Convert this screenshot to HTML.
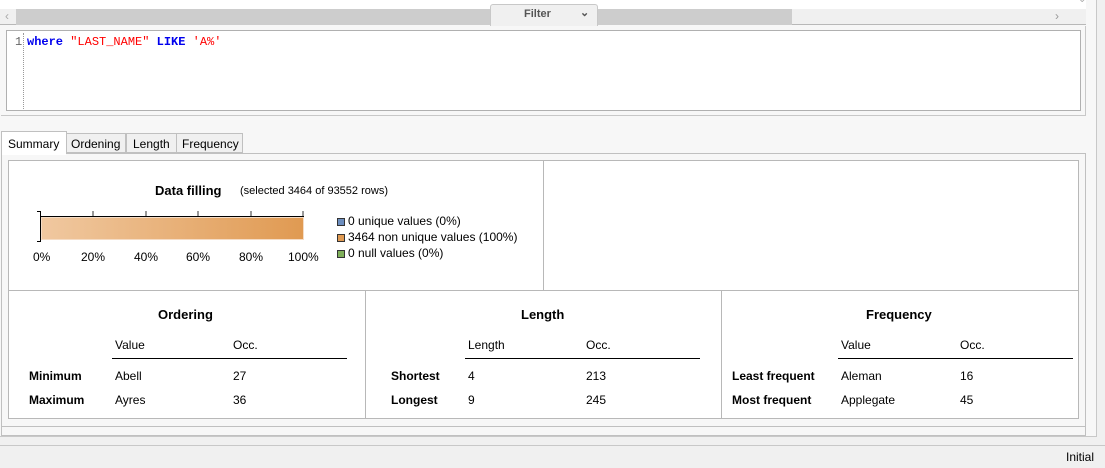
<!DOCTYPE html>
<html><head><style>
*{margin:0;padding:0;box-sizing:border-box}
body{width:1105px;height:468px;background:#f0f0f0;font-family:"Segoe UI","Liberation Sans",sans-serif;font-size:12px;color:#000;position:relative;overflow:hidden}
.a{position:absolute}
.mono{font-family:"Liberation Mono","DejaVu Sans Mono",monospace;font-size:12px}
.b{font-weight:bold}
</style></head><body>
<div class="a" style="left:0;top:0;width:1097px;height:437px;background:#f7f7f7;border-right:1px solid #c8c8c8;border-bottom:1px solid #c8c8c8"></div>
<div class="a" style="left:0;top:0;width:1086px;height:9px;background:#fff"></div>
<div class="a" style="left:0;top:9px;width:1086px;height:16px;background:#f0f0f0;border-bottom:1px solid #b8b8b8"></div>
<div class="a" style="left:16px;top:9px;width:776px;height:16px;background:#cdcdcd"></div>
<div class="a" style="left:5px;top:9px;color:#aaa;font-size:12px">&#8249;</div>
<div class="a" style="left:1055px;top:9px;color:#999;font-size:12px">&#8250;</div>
<div class="a" style="left:1078px;top:-6px;color:#aaa;font-size:10px">&#8964;</div>
<div class="a" style="left:490px;top:4px;width:108px;height:22px;background:#f0f0f0;border:1px solid #c8c8c8;border-bottom:none;border-radius:3px 3px 0 0"></div>
<div class="a b" style="left:524px;top:8px;font-size:11px;color:#555">Filter</div>
<div class="a b" style="left:580px;top:6px;font-size:11px;color:#555">&#8964;</div>
<div class="a" style="left:1px;top:26px;width:1085px;height:90px;border-bottom:1px solid #c8c8c8;border-right:1px solid #c8c8c8"></div>
<div class="a" style="left:6px;top:30px;width:1075px;height:81px;background:#fff;border:1px solid #b0b0b0"></div>
<div class="a" style="left:23px;top:33px;height:76px;border-left:1px dotted #999"></div>
<div class="a mono" style="left:15px;top:35px;color:#666">1</div>
<div class="a mono" style="left:27px;top:35px;white-space:pre"><span style="color:#0000ee;font-weight:bold">where</span> <span style="color:#f00">"LAST_NAME"</span> <span style="color:#0000ee;font-weight:bold">LIKE</span> <span style="color:#f00">'A%'</span></div>
<div class="a" style="left:66px;top:133px;width:60px;height:20px;background:#f0f0f0;border:1px solid #c0c0c0"></div>
<div class="a" style="left:71px;top:137px">Ordening</div>
<div class="a" style="left:126px;top:133px;width:51px;height:20px;background:#f0f0f0;border:1px solid #c0c0c0"></div>
<div class="a" style="left:133px;top:137px">Length</div>
<div class="a" style="left:176px;top:133px;width:67px;height:20px;background:#f0f0f0;border:1px solid #c0c0c0"></div>
<div class="a" style="left:182px;top:137px">Frequency</div>
<div class="a" style="left:1px;top:153px;width:1085px;height:283px;border:1px solid #c0c0c0"></div>
<div class="a" style="left:2px;top:131px;width:64px;height:24px;background:#fff"></div>
<div class="a" style="left:1px;top:131px;width:66px;height:23px;border:1px solid #c0c0c0;border-bottom:none"></div>
<div class="a" style="left:8px;top:137px">Summary</div>
<div class="a" style="left:8px;top:160px;width:1071px;height:259px;background:#fff;border:1px solid #b8b8b8"></div>
<div class="a" style="left:8px;top:290px;width:1071px;height:1px;background:#b8b8b8"></div>
<div class="a" style="left:543px;top:160px;width:1px;height:131px;background:#b8b8b8"></div>
<div class="a" style="left:365px;top:290px;width:1px;height:129px;background:#b8b8b8"></div>
<div class="a" style="left:721px;top:290px;width:1px;height:129px;background:#b8b8b8"></div>
<div class="a" style="left:1px;top:426px;width:1085px;height:1px;background:#c0c0c0"></div>
<div class="a b" style="left:155px;top:183px;font-size:13px">Data filling</div>
<div class="a" style="left:240px;top:185px;font-size:11px">(selected 3464 of 93552 rows)</div>
<div class="a" style="left:40px;top:211px;width:1px;height:31px;background:#000"></div>
<div class="a" style="left:37px;top:211px;width:3px;height:1px;background:#000"></div>
<div class="a" style="left:37px;top:241px;width:3px;height:1px;background:#000"></div>
<div class="a" style="left:40px;top:216px;width:264px;height:1px;background:#000"></div>
<div class="a" style="left:41px;top:217px;width:263px;height:23px;background:linear-gradient(90deg,#f0c8a0,#e09a52);border:1px solid #f5dcc5"></div>
<div class="a" style="left:92px;top:211px;width:2px;height:5px;background:#999"></div>
<div class="a" style="left:145px;top:211px;width:2px;height:5px;background:#999"></div>
<div class="a" style="left:197px;top:211px;width:2px;height:5px;background:#999"></div>
<div class="a" style="left:250px;top:211px;width:2px;height:5px;background:#999"></div>
<div class="a" style="left:302px;top:211px;width:2px;height:5px;background:#999"></div>
<div class="a" style="left:33px;top:250px">0%</div>
<div class="a" style="left:81px;top:250px">20%</div>
<div class="a" style="left:134px;top:250px">40%</div>
<div class="a" style="left:186px;top:250px">60%</div>
<div class="a" style="left:239px;top:250px">80%</div>
<div class="a" style="left:288px;top:250px">100%</div>
<div class="a" style="left:337px;top:218px;width:8px;height:8px;background:#6c8ebf;border:1px solid #333"></div>
<div class="a" style="left:348px;top:214px">0 unique values (0%)</div>
<div class="a" style="left:337px;top:234px;width:8px;height:8px;background:#e09a52;border:1px solid #333"></div>
<div class="a" style="left:348px;top:230px">3464 non unique values (100%)</div>
<div class="a" style="left:337px;top:250px;width:8px;height:8px;background:#7fb05a;border:1px solid #333"></div>
<div class="a" style="left:348px;top:246px">0 null values (0%)</div>
<div class="a b" style="left:158px;top:307px;font-size:13px">Ordering</div>
<div class="a" style="left:115px;top:338px">Value</div>
<div class="a" style="left:233px;top:338px">Occ.</div>
<div class="a" style="left:112px;top:358px;width:235px;height:1px;background:#000"></div>
<div class="a b" style="left:29px;top:369px">Minimum</div><div class="a" style="left:115px;top:369px">Abell</div><div class="a" style="left:233px;top:369px">27</div>
<div class="a b" style="left:29px;top:393px">Maximum</div><div class="a" style="left:115px;top:393px">Ayres</div><div class="a" style="left:233px;top:393px">36</div>
<div class="a b" style="left:521px;top:307px;font-size:13px">Length</div>
<div class="a" style="left:468px;top:338px">Length</div>
<div class="a" style="left:586px;top:338px">Occ.</div>
<div class="a" style="left:465px;top:358px;width:235px;height:1px;background:#000"></div>
<div class="a b" style="left:391px;top:369px">Shortest</div><div class="a" style="left:468px;top:369px">4</div><div class="a" style="left:586px;top:369px">213</div>
<div class="a b" style="left:391px;top:393px">Longest</div><div class="a" style="left:468px;top:393px">9</div><div class="a" style="left:586px;top:393px">245</div>
<div class="a b" style="left:866px;top:307px;font-size:13px">Frequency</div>
<div class="a" style="left:841px;top:338px">Value</div>
<div class="a" style="left:960px;top:338px">Occ.</div>
<div class="a" style="left:838px;top:358px;width:235px;height:1px;background:#000"></div>
<div class="a b" style="left:732px;top:369px">Least frequent</div><div class="a" style="left:841px;top:369px">Aleman</div><div class="a" style="left:960px;top:369px">16</div>
<div class="a b" style="left:732px;top:393px">Most frequent</div><div class="a" style="left:841px;top:393px">Applegate</div><div class="a" style="left:960px;top:393px">45</div>
<div class="a" style="left:0;top:445px;width:1105px;height:1px;background:#c8c8c8"></div>
<div class="a" style="left:1066px;top:450px">Initial</div>
</body></html>
